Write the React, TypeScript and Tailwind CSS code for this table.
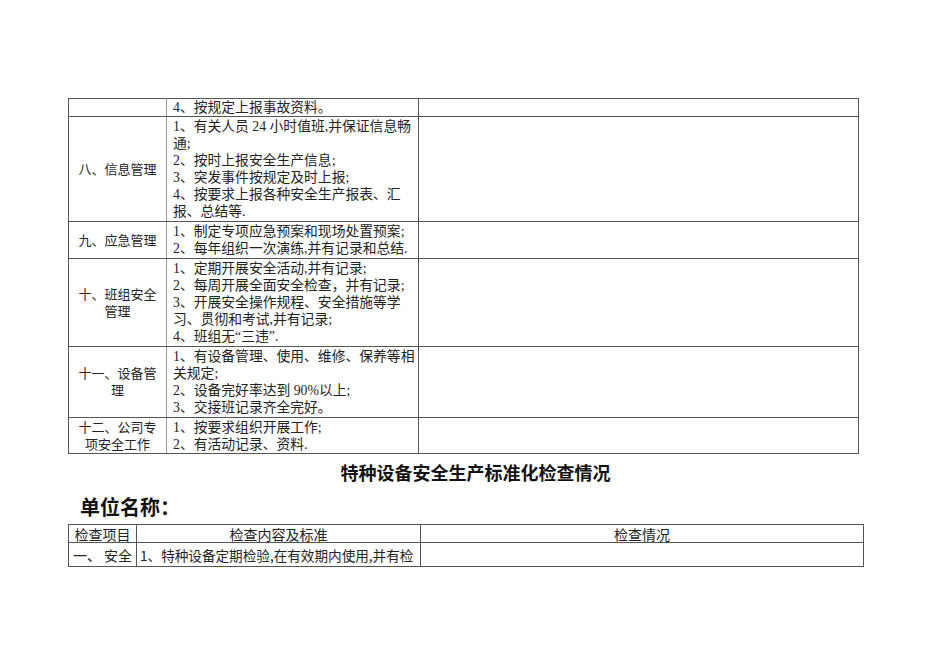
import React from "react";

type Row = { item: string[]; lines: string[] };

const rows: Row[] = [
  { item: [], lines: ["4、按规定上报事故资料。"] },
  {
    item: ["八、信息管理"],
    lines: [
      "1、有关人员 24 小时值班,并保证信息畅",
      "通;",
      "2、按时上报安全生产信息;",
      "3、突发事件按规定及时上报;",
      "4、按要求上报各种安全生产报表、汇",
      "报、总结等.",
    ],
  },
  {
    item: ["九、应急管理"],
    lines: ["1、制定专项应急预案和现场处置预案;", "2、每年组织一次演练,并有记录和总结."],
  },
  {
    item: ["十、班组安全", "管理"],
    lines: [
      "1、定期开展安全活动,并有记录;",
      "2、每周开展全面安全检查，并有记录;",
      "3、开展安全操作规程、安全措施等学",
      "习、贯彻和考试,并有记录;",
      "4、班组无“三违”.",
    ],
  },
  {
    item: ["十一、设备管", "理"],
    lines: [
      "1、有设备管理、使用、维修、保养等相",
      "关规定;",
      "2、设备完好率达到 90%以上;",
      "3、交接班记录齐全完好。",
    ],
  },
  {
    item: ["十二、公司专", "项安全工作"],
    lines: ["1、按要求组织开展工作;", "2、有活动记录、资料."],
  },
];

const serif = { fontFamily: '"Liberation Serif", "Noto Sans CJK SC", serif' };
const sans = { fontFamily: '"Noto Sans CJK SC", "Liberation Sans", sans-serif' };

export default function App() {
  return (
    <div className="w-[950px] h-[672px] bg-white pt-[98px] pl-[68px] text-[#222]" style={serif}>
      {/* upper table, continued from previous page */}
      <table className="border-collapse table-fixed w-[790px] text-[13px] leading-[17px]">
        <colgroup>
          <col className="w-[98px]" />
          <col className="w-[252px]" />
          <col className="w-[440px]" />
        </colgroup>
        <tbody>
          {rows.map((r, i) => (
            <tr key={i}>
              <td className="border border-[#555] border-r-[#999] px-1 text-center align-middle">
                {r.item.map((t) => (
                  <div key={t} className="whitespace-nowrap">{t}</div>
                ))}
              </td>
              <td
                className={
                  i === 0
                    ? "border border-[#555] pl-[6px] pr-1 align-top text-[13.8px]"
                    : i === rows.length - 1
                      ? "border border-[#555] pl-[6px] pr-1 pt-[1px] align-top text-[13.8px]"
                      : "border border-[#555] pl-[6px] pr-1 py-[1px] align-top text-[13.8px]"
                }
              >
                {r.lines.map((t, j) => (
                  <div key={j} className="whitespace-nowrap">{t}</div>
                ))}
              </td>
              <td className="border border-[#555]"></td>
            </tr>
          ))}
        </tbody>
      </table>

      {/* section title */}
      <div className="w-[815px] mt-[6px] text-center text-[18px] leading-[24px] font-bold text-[#111]" style={sans}>
        特种设备安全生产标准化检查情况
      </div>
      <div className="mt-[9px] pl-[12px] text-[20px] leading-[28px] font-bold text-[#111]" style={sans}>
        单位名称：
      </div>

      {/* lower table */}
      <table className="mt-[3px] border-collapse table-fixed w-[795px] text-[14px] leading-[16px]" style={sans}>
        <colgroup>
          <col className="w-[68px]" />
          <col className="w-[284px]" />
          <col className="w-[443px]" />
        </colgroup>
        <tbody>
          <tr className="h-[18px]">
            <td className="border border-[#555] text-center whitespace-nowrap">检查项目</td>
            <td className="border border-[#555] text-center">检查内容及标准</td>
            <td className="border border-[#555] text-center">检查情况</td>
          </tr>
          <tr className="h-[24px]">
            <td className="border border-[#555] text-center align-top pt-[4px] whitespace-nowrap">一、 安全</td>
            <td className="border border-[#555] pl-[3px] align-top pt-[4px] whitespace-nowrap text-[13.6px]">
              1、特种设备定期检验,在有效期内使用,并有检
            </td>
            <td className="border border-[#555]"></td>
          </tr>
        </tbody>
      </table>
    </div>
  );
}
